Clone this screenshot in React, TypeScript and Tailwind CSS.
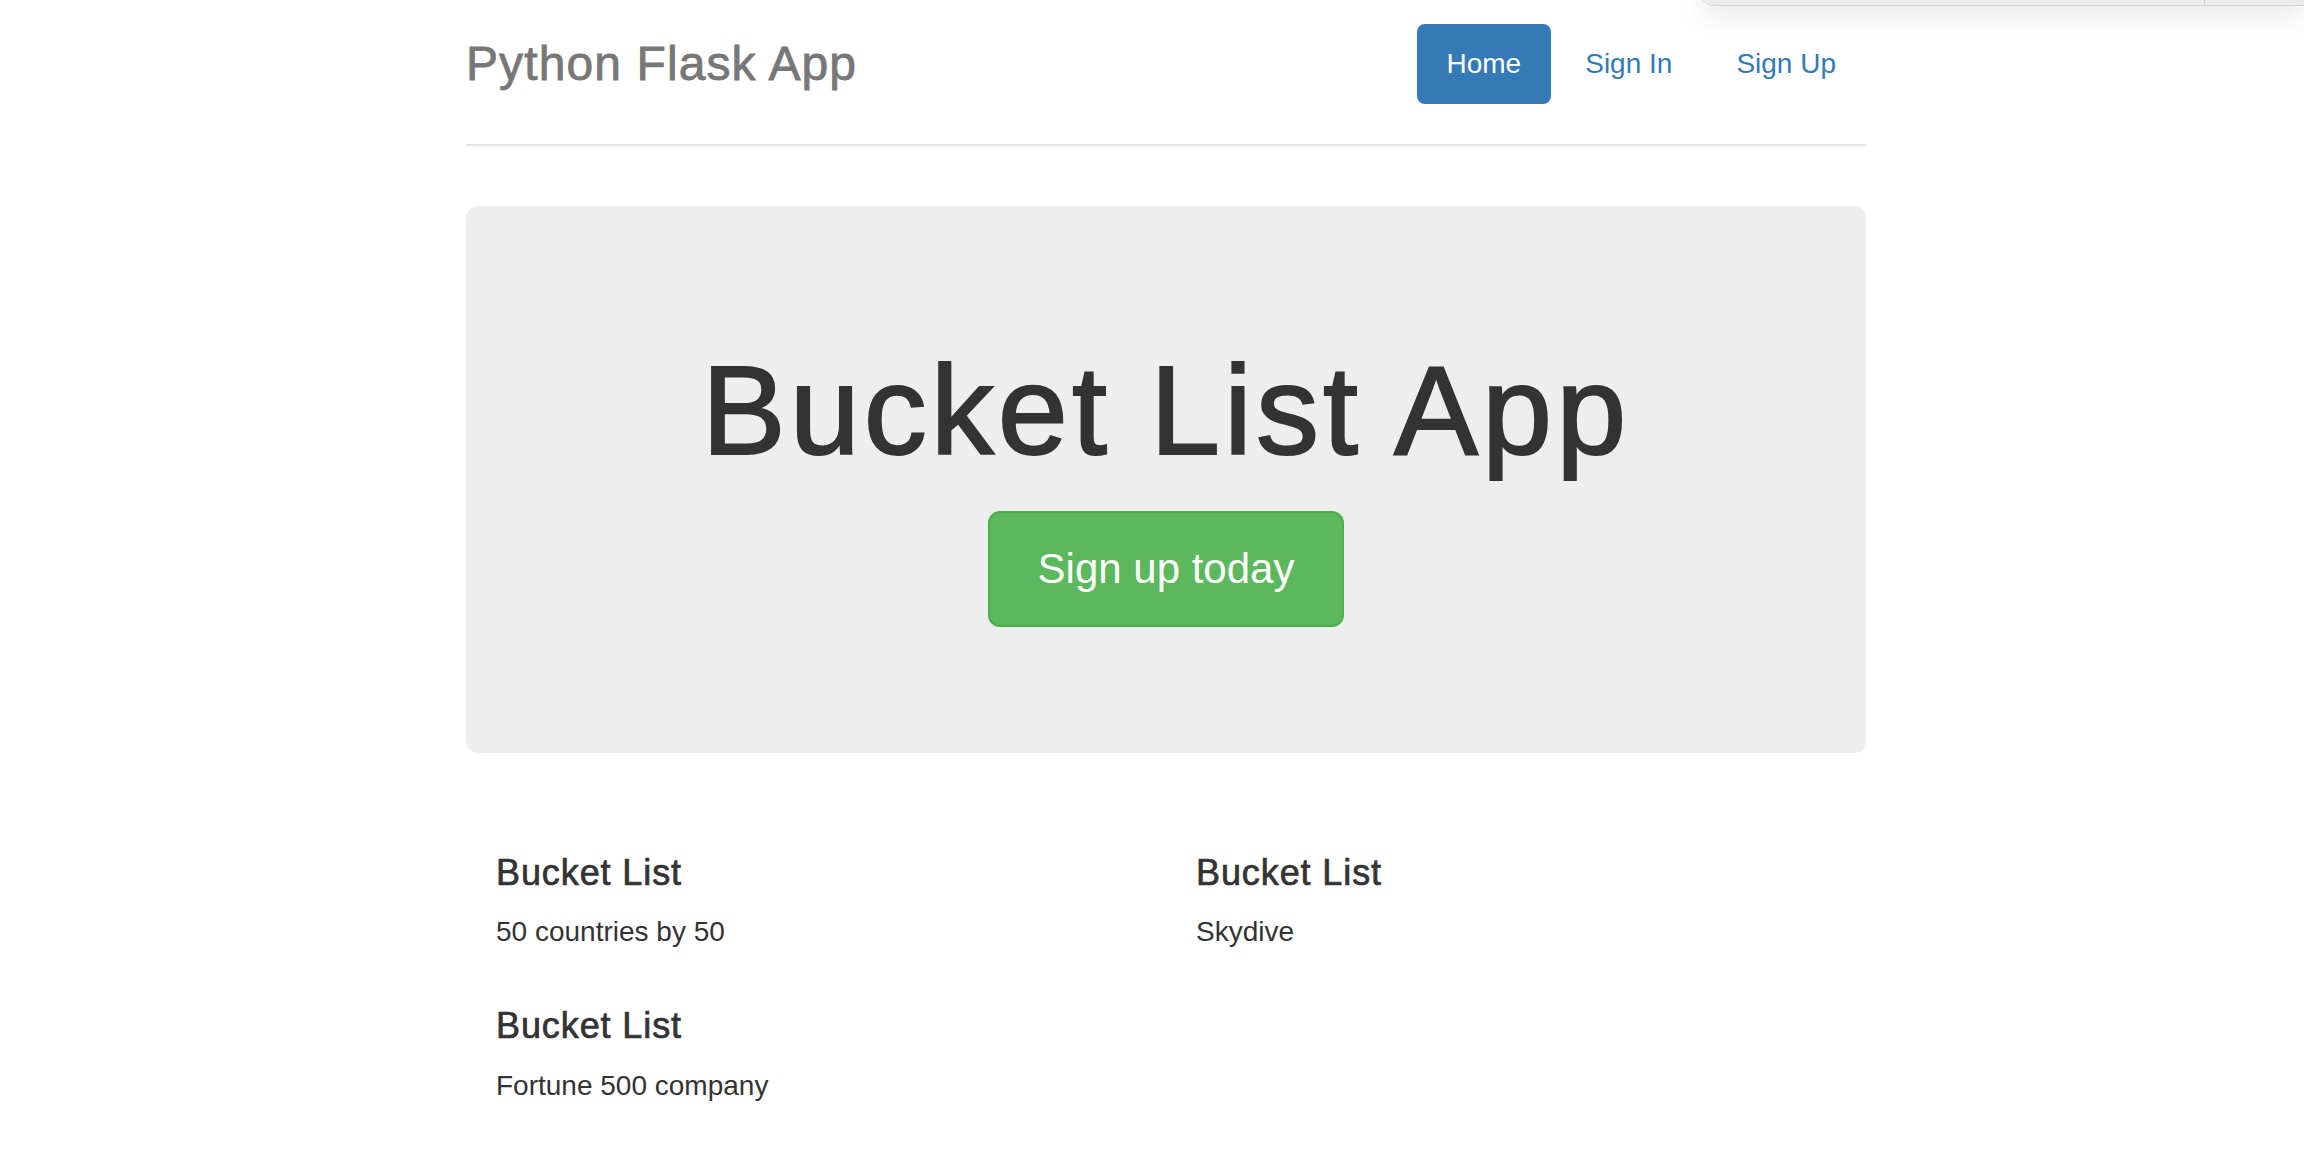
import React from 'react';

const items = [
  { title: 'Bucket List', text: '50 countries by 50' },
  { title: 'Bucket List', text: 'Skydive' },
  { title: 'Bucket List', text: 'Fortune 500 company' },
];

const Wish = ({ title, text }: { title: string; text: string }) => (
  <>
    <h4 className="mt-[20px] mb-[20px] text-[36px] leading-[1.1] tracking-[0.9px] text-[#333] [-webkit-text-stroke:0.7px_#333] [&:not(:first-child)]:mt-[54px]">
      {title}
    </h4>
    <p className="mb-[20px] text-[28px] leading-[40px] text-[#333]">{text}</p>
  </>
);

const App = () => {
  return (
    <div className="relative min-h-[1156px] bg-white font-['Liberation_Sans',Arial,sans-serif] text-[#333]">
      {/* browser popup edge peeking in at the top right */}
      <div className="absolute left-[1700px] right-0 top-[-20px] flex h-[26px] rounded-bl-[14px] border-b border-[#d4d4d4] bg-[#ececec] shadow-[0_8px_28px_rgba(0,0,0,0.10)]">
        <div className="flex-1" />
        <div className="w-[100px] border-l border-[#cfcfcf]" />
      </div>

      <div className="ml-[466px] w-[1400px] pt-[24px]">
        <div className="flex items-start justify-between border-b-2 border-[#e5e5e5] pb-[40px]">
          <h3 className="text-[48px] leading-[80px] tracking-[1.1px] text-[#777] [-webkit-text-stroke:0.8px_#777]">
            Python Flask App
          </h3>
          <ul className="flex gap-[4px]">
            <li>
              <a className="block rounded-[8px] bg-[#337ab7] px-[30px] py-[20px] text-[28px] leading-[40px] text-white" href="#">
                Home
              </a>
            </li>
            <li>
              <a className="block rounded-[8px] px-[30px] py-[20px] text-[28px] leading-[40px] text-[#337ab7]" href="#">
                Sign In
              </a>
            </li>
            <li>
              <a className="block rounded-[8px] px-[30px] py-[20px] text-[28px] leading-[40px] text-[#337ab7]" href="#">
                Sign Up
              </a>
            </li>
          </ul>
        </div>

        <div className="mt-[60px] rounded-[12px] bg-[#eee] px-[120px] py-[96px] text-center">
          <h1 className="mt-[40px] mb-[30px] text-[126px] leading-[1.1] tracking-[4px] text-[#333] [-webkit-text-stroke:2px_#333]">
            Bucket List App
          </h1>
          <div className="mb-[30px] flex justify-center">
            <a
              className="rounded-[12px] border-2 border-[#4cae4c] bg-[#5cb85c] px-[48px] py-[28px] text-[42px] leading-[56px] text-white"
              href="#"
            >
              Sign up today
            </a>
          </div>
        </div>

        <div className="mt-[80px] grid grid-cols-2">
          <div className="px-[30px]">
            <Wish {...items[0]} />
            <Wish {...items[2]} />
          </div>
          <div className="px-[30px]">
            <Wish {...items[1]} />
          </div>
        </div>
      </div>
    </div>
  );
};

export default App;
